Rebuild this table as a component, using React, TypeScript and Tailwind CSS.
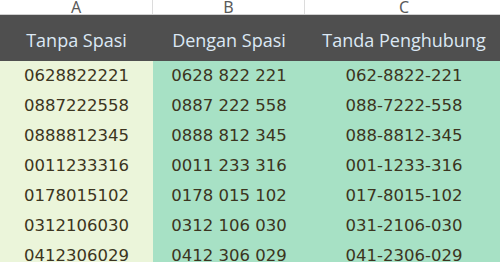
import React from "react";

const rows = [
  ["0628822221", "0628 822 221", "062-8822-221"],
  ["0887222558", "0887 222 558", "088-7222-558"],
  ["0888812345", "0888 812 345", "088-8812-345"],
  ["0011233316", "0011 233 316", "001-1233-316"],
  ["0178015102", "0178 015 102", "017-8015-102"],
  ["0312106030", "0312 106 030", "031-2106-030"],
  ["0412306029", "0412 306 029", "041-2306-029"],
];

const headers = ["Tanpa Spasi", "Dengan Spasi", "Tanda Penghubung"];
const letters = ["A", "B", "C"];

export default function App() {
  return (
    <div className="h-[262px] w-[500px] overflow-hidden bg-white">
      <div className="w-[503px]">
        <div className="grid h-[15px] grid-cols-[153px_152px_198px] border-b border-[#d0d0d0] overflow-hidden">
          {letters.map((l, i) => (
            <div
              key={l}
              className={`flex items-end justify-center overflow-hidden text-[16px] leading-none text-[#5a5a5a] font-['Noto_Sans',sans-serif] ${i < 2 ? "border-r border-[#dcdcdc]" : ""}`}
            >
              <span className="-mb-[1px]">{l}</span>
            </div>
          ))}
        </div>
        <div className="grid h-[46px] grid-cols-[153px_152px_198px] bg-[#4f4f4f]">
          {headers.map((h) => (
            <div
              key={h}
              className="flex items-center justify-center pt-[4px] text-[18px] text-[#dce8f4] font-['Open_Sans',sans-serif]"
            >
              {h}
            </div>
          ))}
        </div>
        {rows.map((r, idx) => (
          <div key={idx} className="grid h-[30px] grid-cols-[153px_152px_198px] text-[16.5px] text-[#3b3420] font-['DejaVu_Sans',sans-serif]">
            <div className="flex items-center justify-center bg-[#ebf5da]">{r[0]}</div>
            <div className="flex items-center justify-center bg-[#a7e1c5]">{r[1]}</div>
            <div className="flex items-center justify-center bg-[#a7e1c5]">{r[2]}</div>
          </div>
        ))}
      </div>
    </div>
  );
}
